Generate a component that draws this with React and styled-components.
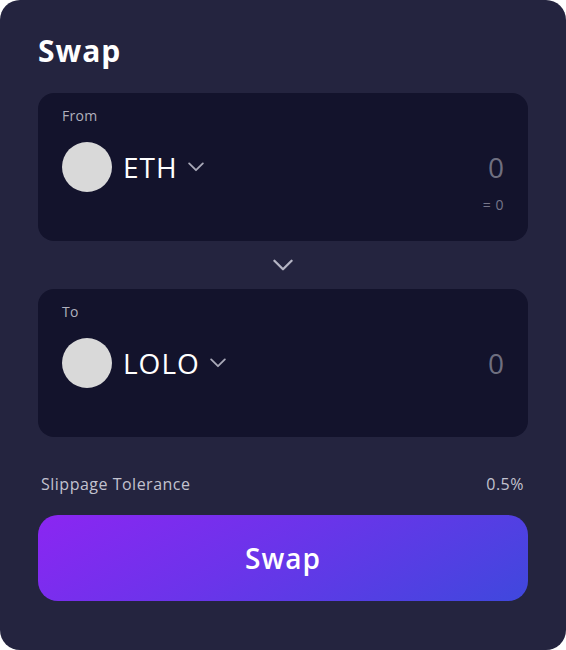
import React from 'react'
import styled, { createGlobalStyle } from 'styled-components';

const GlobalStyle = createGlobalStyle`
  body {
    margin: 0;
    background: #ffffff;
    font-family: "Open Sans", "Liberation Sans", sans-serif;
  }
`;

function Chevron({ size = 14, color = '#a9a9b8' }) {
  return (
    <svg width={size} height={size * 0.6} viewBox="0 0 14 8" fill="none">
      <path d="M1 1l6 6 6-6" stroke={color} strokeWidth="1.6" strokeLinecap="round" strokeLinejoin="round" />
    </svg>
  );
}

function TokenPanel({ label, token, amount, converted }) {
  return (
    <Panel>
      <PanelLabel>{label}</PanelLabel>
      <TokenRow>
        <TokenSelect>
          <TokenIcon />
          <TokenName>{token}</TokenName>
          <Chevron size={16} />
        </TokenSelect>
        <Amount>{amount}</Amount>
      </TokenRow>
      <Converted>{converted}</Converted>
    </Panel>
  );
}

function App() {
  return (
    <>
      <GlobalStyle />
      <Card>
        <Title>Swap</Title>
        <TokenPanel label="From" token="ETH" amount="0" converted="= 0" />
        <Divider>
          <Chevron size={20} color="#b5b5c4" />
        </Divider>
        <TokenPanel label="To" token="LOLO" amount="0" converted="" />
        <SlippageRow>
          <span>Slippage Tolerance</span>
          <span>0.5%</span>
        </SlippageRow>
        <SwapButton>Swap</SwapButton>
      </Card>
    </>
  )
}

export default App

const Card = styled.div`
  box-sizing: border-box;
  width: 566px;
  height: 650px;
  background: #24243f;
  border-radius: 20px;
  padding: 30px 38px 0;
  display: flex;
  flex-direction: column;
`;

const Title = styled.h1`
  margin: 0 0 21px;
  font-size: 30px;
  line-height: 42px;
  font-weight: 700;
  letter-spacing: 1px;
  color: #ffffff;
`;

const Panel = styled.div`
  box-sizing: border-box;
  height: 148px;
  background: #13132c;
  border-radius: 16px;
  padding: 14px 24px 0;
  display: flex;
  flex-direction: column;
`;

const PanelLabel = styled.div`
  font-size: 14px;
  line-height: 18px;
  letter-spacing: 0.3px;
  color: #b0b0bd;
`;

const TokenRow = styled.div`
  display: flex;
  align-items: center;
  justify-content: space-between;
  margin-top: 17px;
`;

const TokenSelect = styled.div`
  display: flex;
  align-items: center;
  gap: 10px;
  cursor: pointer;
`;

const TokenIcon = styled.div`
  width: 50px;
  height: 50px;
  border-radius: 50%;
  background: #d9d9d9;
  margin-right: 1px;
`;

const TokenName = styled.span`
  font-size: 28px;
  letter-spacing: 1px;
  color: #ffffff;
`;

const Amount = styled.span`
  font-size: 28px;
  color: #6f6f80;
`;

const Converted = styled.div`
  align-self: flex-end;
  font-size: 14px;
  line-height: 18px;
  letter-spacing: 0.5px;
  color: #76768a;
  margin-top: 4px;
`;

const Divider = styled.div`
  height: 48px;
  display: flex;
  align-items: center;
  justify-content: center;
`;

const SlippageRow = styled.div`
  display: flex;
  justify-content: space-between;
  margin: 36px 4px 0 3px;
  font-size: 16px;
  line-height: 22px;
  letter-spacing: 0.5px;
  color: #c2c2cf;
`;

const SwapButton = styled.button`
  margin-top: 20px;
  height: 86px;
  border: none;
  border-radius: 20px;
  background: linear-gradient(150deg, #8b26f2 0%, #6b34ea 45%, #3f48dd 100%);
  color: #ffffff;
  font-family: inherit;
  font-size: 28px;
  font-weight: 600;
  letter-spacing: 1px;
  cursor: pointer;
`;
